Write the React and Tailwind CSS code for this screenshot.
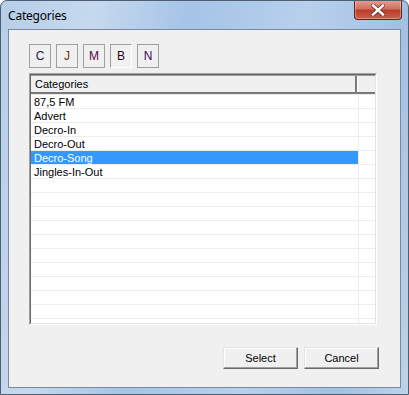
const letters = [
  { k: "C", color: "text-[#14224e]" },
  { k: "J", color: "text-[#5e3c12]" },
  { k: "M", color: "text-[#55063a]" },
  { k: "B", color: "text-[#2a0612]", pressed: true },
  { k: "N", color: "text-[#3a0656]" },
];

const rows = ["87,5 FM", "Advert", "Decro-In", "Decro-Out", "Decro-Song", "Jingles-In-Out"];
const selected = "Decro-Song";

function CloseButton() {
  return (
    <div className="w-[48px] h-[20px] -mt-px rounded-b-[4px] border border-t-0 border-[#6b2318] bg-[linear-gradient(to_bottom,#e4a295_0%,#d27060_45%,#bb3d2a_55%,#cc5f4a_100%)] flex items-center justify-center shadow-[inset_0_0_0_1px_rgba(255,255,255,0.3)]">
      <svg width="14" height="12" viewBox="0 0 14 12">
        <path d="M2 1.5 L12 10.5 M12 1.5 L2 10.5" stroke="#6a3a34" strokeWidth="4.2" strokeLinecap="square" />
        <path d="M2 1.5 L12 10.5 M12 1.5 L2 10.5" stroke="#ffffff" strokeWidth="2.4" strokeLinecap="square" />
      </svg>
    </div>
  );
}

function ListRow({ label }) {
  const sel = label === selected;
  return (
    <div className="flex h-[14px] border-t border-[#ececec] shrink-0">
      <div
        className={`w-[327px] flex items-center pl-[3px] pt-px leading-none ${
          sel ? "bg-[#3399ff] text-white" : "text-black"
        }`}
      >
        {label}
      </div>
      <div className="flex-1 border-l border-[#ececec]" />
    </div>
  );
}

export default function App() {
  const empty = Array.from({ length: 11 });
  return (
    <div className="w-[409px] h-[395px] flex flex-col rounded-t-[7px] border border-[#4f5f72] bg-[linear-gradient(100deg,#b6cee9_0%,#c6d9ee_20%,#a5c4e7_40%,#b8d0ec_65%,#a2c0e3_85%,#bed3ea_100%)] font-['Liberation_Sans',Arial,sans-serif] overflow-hidden">
      {/* title bar */}
      <div className="h-[28px] flex justify-between pl-[7px] pr-[6px] shrink-0">
        <div className="pt-[6px] text-[12px] text-black font-['Noto_Sans','Liberation_Sans',sans-serif] tracking-[-0.2px]">
          Categories
        </div>
        <CloseButton />
      </div>

      {/* client area */}
      <div className="mx-[7px] h-[359px] border border-[#7a8a9c] bg-[#f0f0f0] flex flex-col pl-[20px] pr-[21px] pt-[14px] text-[11px]">
        <div className="flex gap-[5px] h-[24px]">
          {letters.map((l) => (
            <div
              key={l.k}
              className={`w-[22px] h-[24px] flex items-center justify-center text-[12px] ${l.color} ${
                l.pressed
                  ? "border border-t-[#a0a0a0] border-l-[#a0a0a0] border-r-white border-b-white"
                  : "border border-[#a0a0a0]"
              }`}
            >
              {l.k}
            </div>
          ))}
        </div>

        {/* list view */}
        <div className="mt-[5px] w-[348px] h-[252px] border border-t-[#a0a0a0] border-l-[#a0a0a0] border-r-white border-b-white">
          <div className="h-full border border-t-[#696969] border-l-[#696969] border-r-[#e3e3e3] border-b-[#e3e3e3] bg-white flex flex-col overflow-hidden">
            <div className="h-[19px] flex bg-[#f0f0f0] border-t border-b-2 border-t-[#9a9a9a] border-b-[#7a7a7a] shrink-0">
              <div className="w-[326px] flex items-center pl-[4px] border-r-2 border-[#7a7a7a] leading-none text-black">
                Categories
              </div>
              <div className="flex-1 border-l border-white" />
            </div>
            {rows.map((r) => (
              <ListRow key={r} label={r} />
            ))}
            {empty.map((_, i) => (
              <ListRow key={i} label="" />
            ))}
          </div>
        </div>

        <div className="mt-[22px] flex justify-end gap-[6px]">
          {["Select", "Cancel"].map((b) => (
            <div
              key={b}
              className="w-[75px] h-[22px] flex items-center justify-center text-[11px] text-black bg-[#f0f0f0] border border-t-[#e3e3e3] border-l-[#e3e3e3] border-r-[#696969] border-b-[#696969] shadow-[inset_-1px_-1px_0_#a0a0a0,inset_1px_1px_0_#ffffff]"
            >
              {b}
            </div>
          ))}
        </div>
      </div>
    </div>
  );
}
